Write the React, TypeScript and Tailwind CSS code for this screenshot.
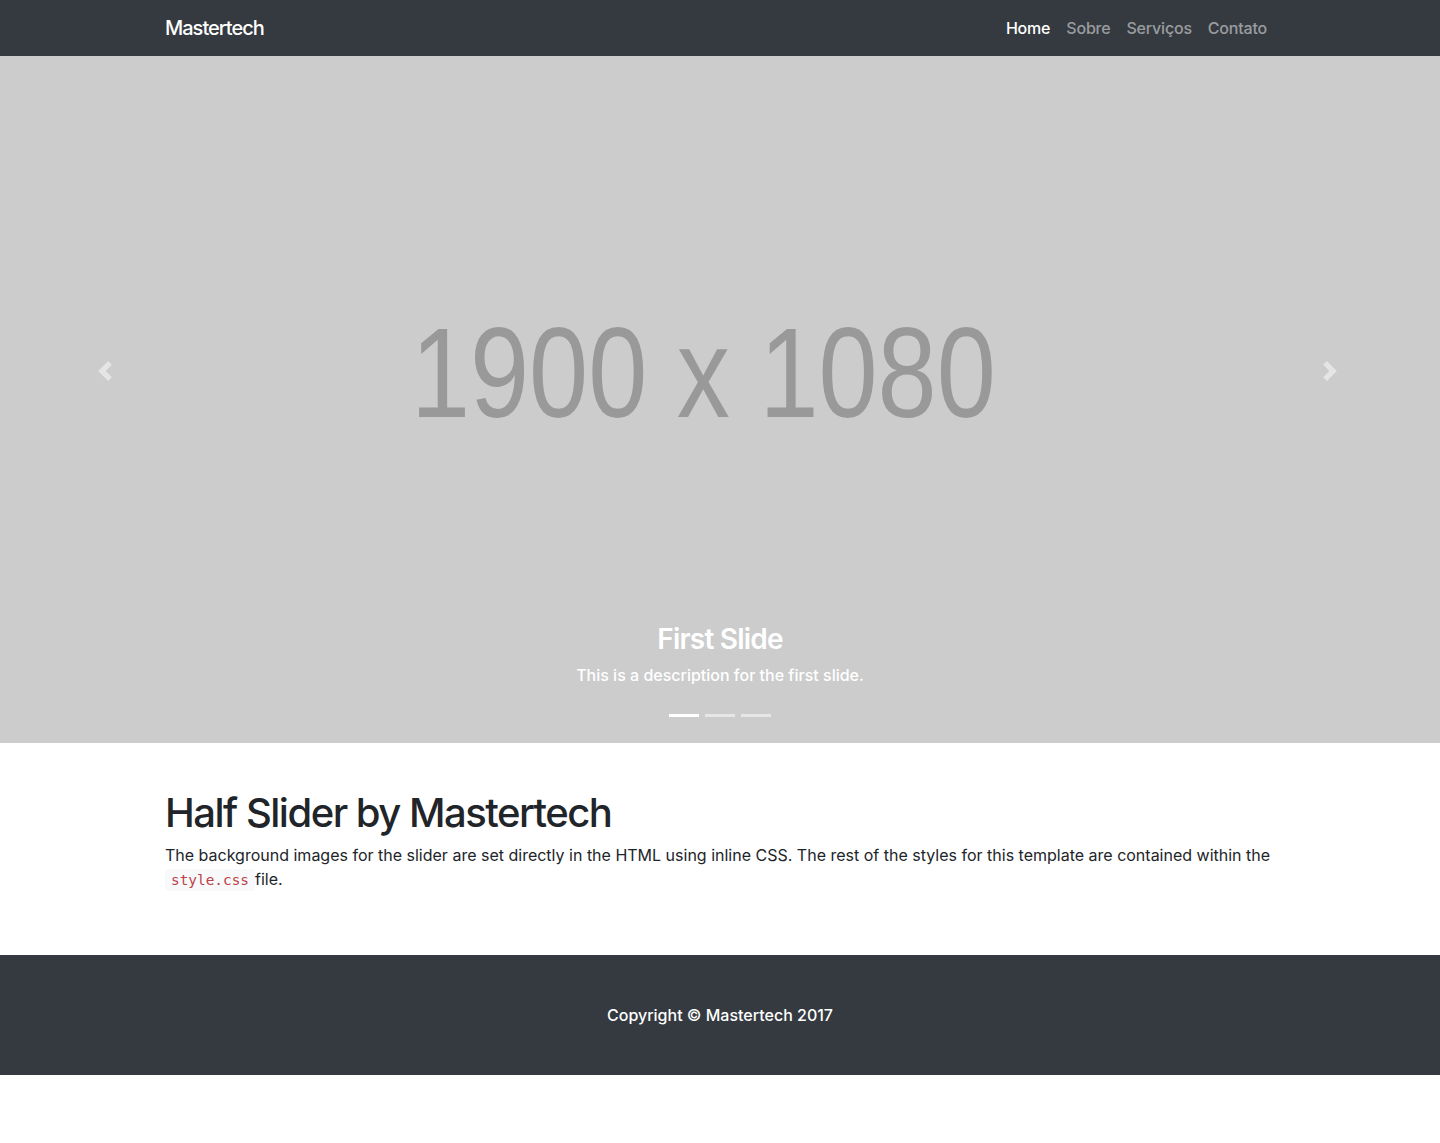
import clsx from 'clsx';

const Menu = [
    { name: 'Home', href: '#', active: true },
    { name: 'Sobre', href: '#' },
    { name: 'Serviços', href: '#' },
    { name: 'Contato', href: '#' },
];

function PrevIcon() {
    return (
        <svg width="20" height="20" viewBox="0 0 8 8" fill="#fff">
            <path d="M5.25 0l-4 4 4 4 1.5-1.5-2.5-2.5 2.5-2.5-1.5-1.5z" />
        </svg>
    );
}

function NextIcon() {
    return (
        <svg width="20" height="20" viewBox="0 0 8 8" fill="#fff">
            <path d="M2.75 0l-1.5 1.5 2.5 2.5-2.5 2.5 1.5 1.5 4-4-4-4z" />
        </svg>
    );
}

export default function App() {
    return (
        <div className="w-full min-h-[1143px] bg-white text-[#212529] font-['Inter','Helvetica_Neue','Liberation_Sans',sans-serif]">
            {/* navbar */}
            <header className="h-14 bg-[#343a40]">
                <div className="max-w-[1140px] h-full mx-auto px-[15px] flex items-center justify-between">
                    <a href="#" className="text-white text-[20px] font-medium tracking-[-1px]">Mastertech</a>
                    <nav className="flex">
                        {Menu.map((item, index) => (
                            <a
                                key={index}
                                href={item.href}
                                className={clsx(
                                    'px-2 text-[16px] font-medium leading-6 tracking-[-0.2px]',
                                    item.active ? 'text-white' : 'text-white/50'
                                )}
                            >
                                {item.name}
                            </a>
                        ))}
                    </nav>
                </div>
            </header>

            {/* half slider */}
            <section className="relative h-[687px] bg-[#cccccc] overflow-hidden">
                <div className="h-full flex items-center justify-center pb-[53px] pr-[34px]">
                    <span className="block text-[#999999] text-[128px] leading-none font-['Liberation_Sans',Arial,sans-serif] scale-x-[0.83] whitespace-nowrap">
                        1900 x 1080
                    </span>
                </div>

                <button type="button" title="Previous" className="absolute left-[95px] top-[305px] opacity-50">
                    <PrevIcon />
                </button>
                <button type="button" title="Next" className="absolute left-[1320px] top-[305px] opacity-50">
                    <NextIcon />
                </button>

                <div className="absolute left-[15%] right-[15%] bottom-5 py-5 text-center text-white">
                    <h3 className="text-[28px] font-semibold leading-[1.1] mb-2 tracking-[-0.8px]">First Slide</h3>
                    <p className="text-[16px] font-medium leading-6 mb-4">This is a description for the first slide.</p>
                </div>

                <ol className="absolute left-0 right-0 bottom-[26px] flex justify-center">
                    <li className="w-[30px] h-[3px] mx-[3px] bg-white" />
                    <li className="w-[30px] h-[3px] mx-[3px] bg-white/50" />
                    <li className="w-[30px] h-[3px] mx-[3px] bg-white/50" />
                </ol>
            </section>

            {/* page content */}
            <section className="py-12">
                <div className="max-w-[1140px] mx-auto px-[15px]">
                    <h1 className="text-[40px] font-medium leading-[1.1] mb-2 tracking-[-1.5px]">Half Slider by Mastertech</h1>
                    <p className="text-[16px] leading-6 mb-4">
                        The background images for the slider are set directly in the HTML using inline CSS. The rest of the styles for this template are contained within the{' '}
                        <code className="px-[6px] py-[3px] rounded bg-[#f8f9fa] text-[#bd4147] text-[14.4px] leading-none font-['DejaVu_Sans_Mono',monospace]">style.css</code>
                        file.
                    </p>
                </div>
            </section>

            {/* footer */}
            <footer className="py-12 bg-[#343a40]">
                <div className="max-w-[1140px] mx-auto px-[15px]">
                    <p className="m-0 text-center text-white text-[16px] font-medium leading-6">Copyright © Mastertech 2017</p>
                </div>
            </footer>
        </div>
    );
}
